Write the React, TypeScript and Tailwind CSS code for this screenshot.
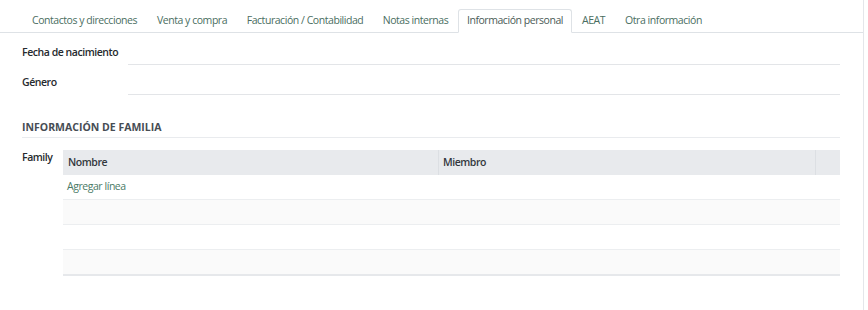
const tabs = [
  { label: 'Contactos y direcciones', w: 'w-[125px]' },
  { label: 'Venta y compra', w: 'w-[90px]' },
  { label: 'Facturación / Contabilidad', w: 'w-[136px]' },
  { label: 'Notas internas', w: 'w-[85px]' },
  { label: 'Información personal', w: 'w-[114px]', active: true },
  { label: 'AEAT', w: 'w-[43px]' },
  { label: 'Otra información', w: 'w-[97px]' },
];

const Field = ({ label, className }: { label: string; className: string }) => (
  <div className={`flex items-center ${className}`}>
    <div className="w-[106px] font-semibold text-[#262a2e]">{label}</div>
    <div className="flex-1 h-[25px] border-b border-[#e3e5e8]" />
  </div>
);

export default function App() {
  return (
    <div className="w-[868px] h-[310px] bg-white font-['Open_Sans',sans-serif] text-[10.5px] tracking-[-0.45px] text-[#374151]">
      <div className="w-[864px] h-[310px] border-r border-[#e4e6ea]">
        <div className="flex pl-[22px] pt-[9px] border-b border-[#dee2e6]">
          {tabs.map((t) => (
            <div
              key={t.label}
              className={`${t.w} h-[24px] -mb-px flex items-center justify-center whitespace-nowrap ${
                t.active
                  ? 'bg-white border border-[#dee2e6] border-b-white rounded-t-[3px] text-[#4b5b57]'
                  : 'border border-transparent text-[#4a6e61]'
              }`}
            >
              {t.label}
            </div>
          ))}
        </div>

        <div className="pl-[22px] pr-[23px]">
          <Field label="Fecha de nacimiento" className="mt-[7px]" />
          <Field label="Género" className="mt-[5px]" />

          <div className="mt-[24px] h-[19px] border-b border-[#e9ebee] font-bold tracking-normal text-[#474d54] flex items-center">
            INFORMACIÓN DE FAMILIA
          </div>

          <div className="flex mt-[12px]">
            <div className="w-[41px] font-semibold text-[#262a2e]">Family</div>
            <div className="flex-1">
              <div className="flex h-[25px] bg-[#e8eaed] font-semibold text-[#33383d]">
                <div className="w-[376px] flex items-center px-[4px] pl-[5px] border-r border-[#dcdfe3]">Nombre</div>
                <div className="flex-1 flex items-center px-[4px] border-r border-[#dcdfe3]">Miembro</div>
                <div className="w-[24px]" />
              </div>
              <div className="h-[25px] border-b border-[#eceef0] flex items-center px-[4px] text-[#4a7a66]">
                Agregar línea
              </div>
              <div className="h-[25px] border-b border-[#eceef0] bg-[#fafafa]" />
              <div className="h-[25px] border-b border-[#eceef0]" />
              <div className="h-[26px] border-b-2 border-[#e6e8eb] bg-[#fafafa]" />
            </div>
          </div>
        </div>
      </div>
    </div>
  );
}
